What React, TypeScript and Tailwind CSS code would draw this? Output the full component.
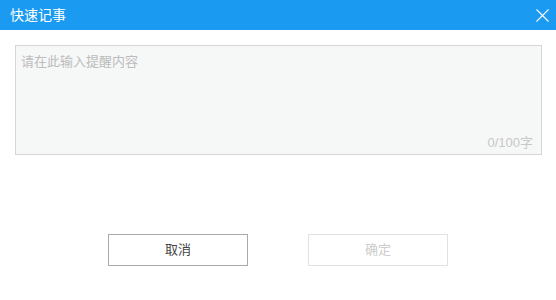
export default function App() {
  return (
    <div
      className="w-[556px] h-[300px] bg-white flex flex-col"
      style={{ fontFamily: '"Liberation Sans", "Noto Sans CJK SC", sans-serif' }}
    >
      {/* header */}
      <div className="h-[30px] bg-[#1a9af0] flex items-center justify-between pl-[10px] pr-[7px]">
        <span className="text-white text-[14px] leading-none">快速记事</span>
        <button className="w-[14px] h-[14px] flex items-center justify-center">
          <svg width="13" height="13" viewBox="0 0 13 13" fill="none">
            <path d="M0.5 0.5 L12.5 12.5 M12.5 0.5 L0.5 12.5" stroke="#ffffff" strokeWidth="1.1" />
          </svg>
        </button>
      </div>

      {/* textarea */}
      <div className="mt-[15px] ml-[15px] w-[527px] h-[110px] border border-[#d6d6d6] bg-[#f6f7f7] relative">
        <div className="pl-[5px] pt-[7px] text-[13px] leading-[18px] text-[#bcbcbc]">请在此输入提醒内容</div>
        <div className="absolute right-[8px] bottom-[3px] text-[13px] leading-[16px] text-[#c8c8c8]">0/100字</div>
      </div>

      {/* buttons */}
      <div className="mt-[79px] flex justify-center gap-[60px]">
        <button className="w-[140px] h-[32px] border border-[#aaaaaa] bg-white text-[13px] text-[#444444]">
          取消
        </button>
        <button className="w-[140px] h-[32px] border border-[#e2e2e2] bg-white text-[13px] text-[#cccccc]">
          确定
        </button>
      </div>
    </div>
  );
}
